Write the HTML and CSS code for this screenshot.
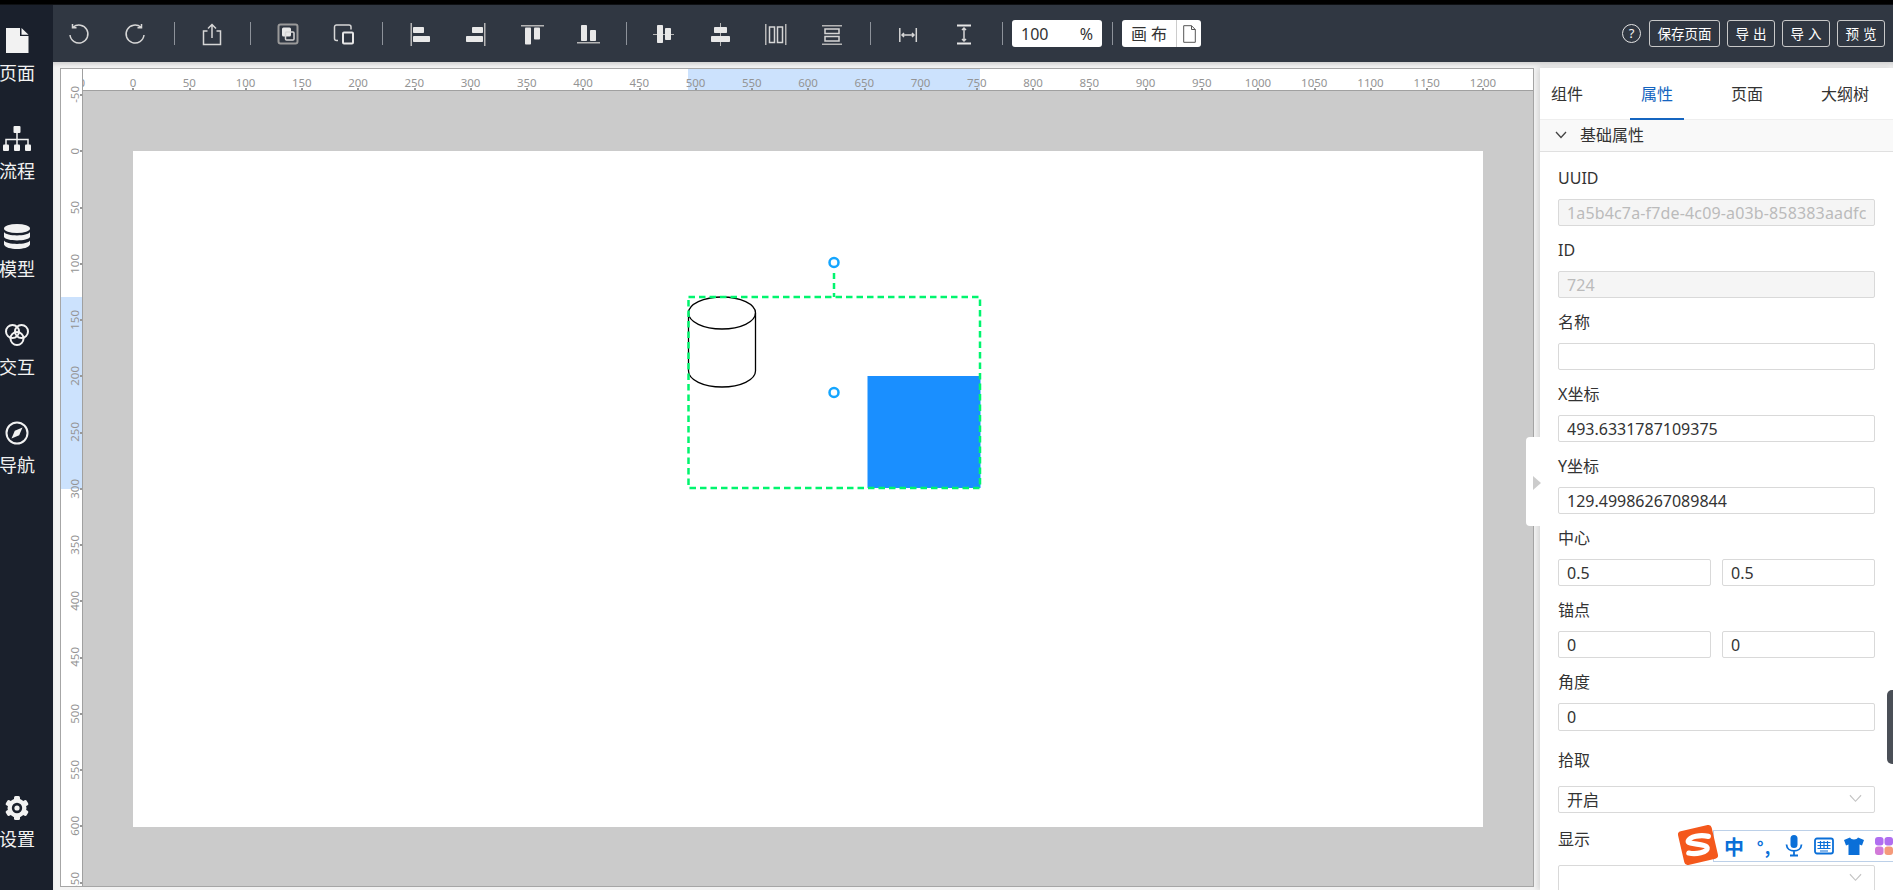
FILE: index.html
```html
<!DOCTYPE html>
<html lang="zh-CN">
<head>
<meta charset="utf-8">
<title>编辑器</title>
<link rel="stylesheet" href="styles.css">
</head>
<body>
<div class="strip"></div>
<div class="app">
  <nav class="sidebar">
    <div class="nav-item">
      <svg class="nav-icon" viewBox="0 0 28 26"><path class="ni-fill" d="M3 0H17V8H25.5V25H3Z"/><path class="ni-fill" d="M18.5 0 25.5 6.8H18.5Z"/></svg>
      <span>页面</span>
    </div>
    <div class="nav-item">
      <svg class="nav-icon" viewBox="0 0 28 26"><rect class="ni-fill" x="10.5" y="0" width="7" height="7" rx="1"/><path class="ni-line" d="M14 7V19M3 19V13.5H25V19"/><rect class="ni-fill" x="0" y="18.5" width="6" height="6.5" rx="1"/><rect class="ni-fill" x="11" y="18.5" width="6" height="6.5" rx="1"/><rect class="ni-fill" x="22" y="18.5" width="6" height="6.5" rx="1"/></svg>
      <span>流程</span>
    </div>
    <div class="nav-item">
      <svg class="nav-icon" viewBox="0 0 28 26"><ellipse class="ni-fill" cx="14" cy="4.5" rx="13" ry="4.5"/><path class="ni-fill" d="M1 8C3 12.500 25 12.500 27 8V13C25 17.500 3 17.500 1 13Z"/><path class="ni-fill" d="M1 16.500C3 21 25 21 27 16.500V20.500C25 26.500 3 26.500 1 20.500Z"/></svg>
      <span>模型</span>
    </div>
    <div class="nav-item">
      <svg class="nav-icon" viewBox="0 0 28 26"><g class="ni-ring"><circle cx="9.500" cy="9.500" r="6.500"/><circle cx="18.500" cy="9.500" r="6.500"/><circle cx="14" cy="16.500" r="6.500"/></g></svg>
      <span>交互</span>
    </div>
    <div class="nav-item">
      <svg class="nav-icon" viewBox="0 0 28 26"><circle class="ni-ring" cx="14" cy="13" r="10.500"/><path class="ni-fill" d="M19.500 7.500 16.200 15.200 8.500 18.500 11.800 10.800Z"/></svg>
      <span>导航</span>
    </div>
    <div class="nav-item nav-bottom">
      <svg class="nav-icon" viewBox="0 0 28 26"><g class="ni-fill"><circle cx="14" cy="13" r="9.500"/><rect x="11" y="1" width="6" height="24" rx="1.500"/><rect x="11" y="1" width="6" height="24" rx="1.500" transform="rotate(60 14 13)"/><rect x="11" y="1" width="6" height="24" rx="1.500" transform="rotate(120 14 13)"/></g><circle class="ni-hole" cx="14" cy="13" r="5.200"/><circle class="ni-fill" cx="14" cy="13" r="2.600"/></svg>
      <span>设置</span>
    </div>
  </nav>

  <div class="main">
    <header class="toolbar">
      <div class="tool-group first">
        <svg class="tool" viewBox="0 0 24 24"><path class="t-line" d="M3 13A9 9 0 1 0 6 5.300M5.500 2V5.800H9.500"/></svg>
        <svg class="tool" viewBox="0 0 24 24"><path class="t-line" d="M21 13A9 9 0 1 1 18 5.300M18.500 2V5.800H14.500"/></svg>
      </div>
      <i class="sep"></i>
      <div class="tool-group">
        <svg class="tool" viewBox="0 0 24 24"><path class="t-line" d="M7.500 9H3.500V22.500H20.500V9H16.500M12 16V2.500M8 6.500 12 2.500 16 6.500"/></svg>
      </div>
      <i class="sep"></i>
      <div class="tool-group">
        <svg class="tool" viewBox="0 0 24 24"><rect class="t-dim" x="2.500" y="2.500" width="19" height="19" rx="2"/><rect class="t-solid" x="6" y="5.500" width="9" height="9" rx="1.500"/><rect class="t-line" x="9.500" y="10" width="8.500" height="8" rx="1"/></svg>
        <svg class="tool" viewBox="0 0 24 24"><path class="t-line" d="M6 18.500H4.500A2 2 0 0 1 2.500 16.500V5A2 2 0 0 1 4.500 3H17A2 2 0 0 1 19 5V7.500"/><rect class="t-line thick" x="11" y="10.500" width="10" height="11" rx="1"/></svg>
      </div>
      <i class="sep"></i>
      <div class="tool-group">
        <svg class="tool" viewBox="0 0 24 24"><rect class="t-dim-bar" x="2.500" y="1" width="1.500" height="23"/><rect class="t-solid" x="5" y="5" width="11" height="6" rx=".8"/><rect class="t-solid" x="5" y="14" width="17" height="6" rx=".8"/></svg>
        <svg class="tool" viewBox="0 0 24 24"><rect class="t-dim-bar" x="20" y="1" width="1.500" height="23"/><rect class="t-solid" x="8" y="5" width="11" height="6" rx=".8"/><rect class="t-solid" x="2" y="14" width="17" height="6" rx=".8"/></svg>
        <svg class="tool" viewBox="0 0 24 24"><rect class="t-dim-bar" x="1" y="3" width="23" height="1.500"/><rect class="t-solid" x="5" y="5.500" width="6" height="17" rx=".8"/><rect class="t-solid" x="14" y="5.500" width="6" height="12" rx=".8"/></svg>
        <svg class="tool" viewBox="0 0 24 24"><rect class="t-dim-bar" x="1" y="20" width="23" height="1.500"/><rect class="t-solid" x="5" y="3" width="6" height="16" rx=".8"/><rect class="t-solid" x="14" y="8" width="6" height="11" rx=".8"/></svg>
      </div>
      <i class="sep"></i>
      <div class="tool-group">
        <svg class="tool" viewBox="0 0 24 24"><rect class="t-dim-bar" x="1" y="12" width="21" height="1"/><rect class="t-solid" x="5" y="3" width="6" height="18" rx=".8"/><rect class="t-solid" x="13" y="6" width="6" height="12" rx=".8"/></svg>
        <svg class="tool" viewBox="0 0 24 24"><rect class="t-dim-bar" x="12" y="1" width="1" height="23"/><rect class="t-solid" x="6" y="5" width="13" height="6" rx=".8"/><rect class="t-solid" x="3" y="14" width="19" height="6" rx=".8"/></svg>
        <svg class="tool" viewBox="0 0 24 24"><rect class="t-dim-bar" x="1" y="2" width="1.500" height="21"/><rect class="t-dim-bar" x="21" y="2" width="1.500" height="21"/><rect class="t-line" x="5.500" y="5" width="5" height="15.500"/><rect class="t-line" x="13.500" y="5" width="5" height="15.500"/></svg>
        <svg class="tool" viewBox="0 0 24 24"><rect class="t-dim-bar" x="2" y="3" width="20" height="1.500"/><rect class="t-dim-bar" x="2" y="21.500" width="20" height="1.500"/><rect class="t-line" x="5" y="7" width="14" height="4.500"/><rect class="t-line" x="5" y="14.500" width="14" height="4.500"/></svg>
      </div>
      <i class="sep"></i>
      <div class="tool-group">
        <svg class="tool" viewBox="0 0 24 24"><path class="t-line" d="M3.800 6V20M20.300 6V20M6 13H18M8 11 6 13 8 15M16 11 18 13 16 15"/></svg>
        <svg class="tool" viewBox="0 0 24 24"><path class="t-line thick" d="M5 3.500H19M5 21.500H19"/><path class="t-line" d="M12 6V19M10 8 12 6 14 8M10 17 12 19 14 17"/></svg>
      </div>
      <i class="sep"></i>
      <div class="zoom-box"><span>100</span><span>%</span></div>
      <i class="sep"></i>
      <div class="canvas-switch">
        <span class="canvas-label">画布</span>
        <span class="canvas-page">
          <svg class="canvas-page-icon" viewBox="0 0 13 18"><path d="M.7.700H8.500L12.300 4.500V17.300H.7ZM8.500.700V4.500H12.300"/></svg>
        </span>
      </div>
      <div class="actions">
        <span class="help">?</span>
        <button class="btn">保存页面</button>
        <button class="btn btn-short">导出</button>
        <button class="btn btn-short">导入</button>
        <button class="btn btn-short">预览</button>
      </div>
    </header>

    <div class="content">
      <section class="design">
        <div class="vruler">
          <i class="vmark"></i>
          <div class="vcells">
            <span class="vcell"><b>-50</b></span><span class="vcell"><b>0</b></span><span class="vcell"><b>50</b></span><span class="vcell"><b>100</b></span><span class="vcell"><b>150</b></span><span class="vcell"><b>200</b></span><span class="vcell"><b>250</b></span><span class="vcell"><b>300</b></span><span class="vcell"><b>350</b></span><span class="vcell"><b>400</b></span><span class="vcell"><b>450</b></span><span class="vcell"><b>500</b></span><span class="vcell"><b>550</b></span><span class="vcell"><b>600</b></span><span class="vcell"><b>650</b></span>
          </div>
        </div>
        <div class="hruler">
          <i class="hmark"></i>
          <div class="hcells">
            <span class="hcell"><b>-50</b></span><span class="hcell"><b>0</b></span><span class="hcell"><b>50</b></span><span class="hcell"><b>100</b></span><span class="hcell"><b>150</b></span><span class="hcell"><b>200</b></span><span class="hcell"><b>250</b></span><span class="hcell"><b>300</b></span><span class="hcell"><b>350</b></span><span class="hcell"><b>400</b></span><span class="hcell"><b>450</b></span><span class="hcell"><b>500</b></span><span class="hcell"><b>550</b></span><span class="hcell"><b>600</b></span><span class="hcell"><b>650</b></span><span class="hcell"><b>700</b></span><span class="hcell"><b>750</b></span><span class="hcell"><b>800</b></span><span class="hcell"><b>850</b></span><span class="hcell"><b>900</b></span><span class="hcell"><b>950</b></span><span class="hcell"><b>1000</b></span><span class="hcell"><b>1050</b></span><span class="hcell"><b>1100</b></span><span class="hcell"><b>1150</b></span><span class="hcell"><b>1200</b></span>
          </div>
        </div>
        <div class="stage">
          <div class="page">
            <svg class="scene" viewBox="0 0 1349 676">
              <rect class="obj-rect" x="734" y="225" width="113" height="112"/>
              <ellipse class="obj-cyl" cx="588.500" cy="162" rx="33.500" ry="16"/>
              <path class="obj-cyl" d="M555 162V220A33.500 16 0 0 0 622 220V162"/>
              <rect class="sel-box" x="555" y="146" width="291.500" height="191"/>
              <path class="sel-line" d="M700.500 122V146"/>
              <circle class="sel-handle" cx="700.500" cy="111.500" r="4.500"/>
              <circle class="sel-handle" cx="700.500" cy="241.500" r="4.500"/>
            </svg>
          </div>
        </div>
      </section>

      <aside class="panel">
        <div class="panel-toggle"><i class="toggle-arrow"></i></div>
        <div class="tabs">
          <span class="tab">组件</span>
          <span class="tab active">属性</span>
          <span class="tab">页面</span>
          <span class="tab">大纲树</span>
        </div>
        <div class="section-head">
          <svg class="chev" viewBox="0 0 12 8"><path d="M1 1 6 6.500 11 1"/></svg>
          <span>基础属性</span>
        </div>
        <div class="form">
          <label class="lbl lbl-first">UUID</label>
          <input class="field" disabled value="1a5b4c7a-f7de-4c09-a03b-858383aadfc1">
          <label class="lbl">ID</label>
          <input class="field" disabled value="724">
          <label class="lbl">名称</label>
          <input class="field" readonly value="">
          <label class="lbl">X坐标</label>
          <input class="field" readonly value="493.6331787109375">
          <label class="lbl">Y坐标</label>
          <input class="field" readonly value="129.49986267089844">
          <label class="lbl">中心</label>
          <div class="pair">
            <input class="field" readonly value="0.5">
            <input class="field" readonly value="0.5">
          </div>
          <label class="lbl">锚点</label>
          <div class="pair">
            <input class="field" readonly value="0">
            <input class="field" readonly value="0">
          </div>
          <label class="lbl lbl-tall">角度</label>
          <input class="field field-tall" readonly value="0">
          <label class="lbl lbl-pick">拾取</label>
          <div class="select"><span>开启</span><svg class="sel-chev" viewBox="0 0 14 9"><path d="M1 1 7 7.500 13 1"/></svg></div>
          <label class="lbl lbl-show">显示</label>
          <div class="select"><span></span><svg class="sel-chev" viewBox="0 0 14 9"><path d="M1 1 7 7.500 13 1"/></svg></div>
        </div>
      </aside>
    </div>
  </div>
</div>

<div class="edge-tab"></div>

<div class="ime">
  <svg class="ime-logo" viewBox="0 0 40 40"><rect class="ime-logo-bg" x="5" y="5" width="30" height="30" rx="3" transform="rotate(-13 20 20)"/><path class="ime-logo-s" d="M29 12.500C22 11 13 12.500 11.500 16.500 10.500 20 27.500 18.500 28 22.500 28.500 26.500 18 28.500 12 27"/></svg>
  <span class="ime-item ime-zh">中</span>
  <span class="ime-item ime-punc">°,</span>
  <span class="ime-item"><svg class="ime-icon" viewBox="0 0 20 22"><rect class="ime-fill" x="6.500" y="0" width="7" height="13" rx="3.500"/><path class="ime-line" d="M2.500 9.500C3 18 17 18 17.500 9.500M10 16V20M6 20.500H14"/></svg></span>
  <span class="ime-item"><svg class="ime-icon" viewBox="0 0 20 22"><rect class="ime-line" x="1" y="3.500" width="18" height="15" rx="2"/><path class="ime-thin" d="M3.500 7.500H16.500M3.500 10.500H16.500M3.500 13.500H16.500M6.500 6V14M10 6V14M13.500 6V14M6 16H14"/></svg></span>
  <span class="ime-item"><svg class="ime-icon" viewBox="0 0 20 22"><path class="ime-fill" d="M6 2.500 0 5 2 10.500 4.500 9.500V20H15.500V9.500L18 10.500 20 5 14 2.500C13 5 7 5 6 2.500Z"/></svg></span>
  <span class="ime-item"><svg class="ime-icon" viewBox="0 0 20 22"><rect class="clover-a" x="1" y="2" width="8.500" height="8.500" rx="3"/><rect class="clover-a" x="10.500" y="2" width="8.500" height="8.500" rx="3"/><rect class="clover-c" x="1" y="11.500" width="8.500" height="8.500" rx="3"/><rect class="clover-b" x="10.500" y="11.500" width="8.500" height="8.500" rx="3"/></svg></span>
</div>
</body>
</html>
```

FILE: styles.css
```css
* { box-sizing: border-box; }
html, body { margin: 0; height: 100%; }
body {
  width: 1893px;
  height: 890px;
  overflow: hidden;
  position: relative;
  font-family: "Noto Sans", "Noto Sans CJK SC", sans-serif;
  font-size: 16px;
  color: #333;
  display: flex;
  flex-direction: column;
  background: #f3f3f3;
}

.strip { height: 5px; flex: none; background: linear-gradient(#000 70%, #15181d); }
.app { flex: 1; display: flex; min-height: 0; }

/* Sidebar */
.sidebar {
  width: 53px;
  flex: none;
  background: #1a202c;
  color: #f2f2f2;
  display: flex;
  flex-direction: column;
  padding: 15px 0 40px;
  overflow: hidden;
}
.nav-item {
  width: 34px;
  height: 98px;
  display: flex;
  flex-direction: column;
  align-items: center;
  padding-top: 8px;
  flex: none;
  gap: 6px;
}
.nav-item span { font-size: 18px; line-height: 24px; white-space: nowrap; font-family: "Noto Sans CJK SC", sans-serif; }
.nav-bottom { margin-top: auto; height: auto; padding-top: 0; gap: 5px; }
.nav-icon { width: 28px; height: 26px; flex: none; }
.ni-fill { fill: #f2f2f2; }
.ni-line { fill: none; stroke: #f2f2f2; stroke-width: 1.500; }
.ni-ring { fill: none; stroke: #f2f2f2; stroke-width: 2; }
.ni-hole { fill: #1a202c; }

/* Toolbar */
.main { flex: 1; min-width: 0; display: flex; flex-direction: column; }
.toolbar {
  height: 57px;
  flex: none;
  background: #303742;
  display: flex;
  align-items: center;
}
.tool-group { display: flex; gap: 32px; padding: 0 16px; }
.tool-group.first { padding-left: 14px; padding-right: 17px; }
.tool { width: 24px; height: 24px; flex: none; }
.t-line { fill: none; stroke: #d6d6d6; stroke-width: 1.500; }
.t-line.thick { stroke-width: 2; stroke: #e6e6e6; }
.t-dim { fill: none; stroke: #9a9a9a; stroke-width: 2; }
.t-dim-bar { fill: #b5b5b5; }
.t-solid { fill: #e8e8e8; }
.sep { width: 1px; height: 23px; margin: 0 9.500px; background: #8d929a; flex: none; }

.zoom-box {
  width: 90px;
  height: 27px;
  background: #fff;
  border-radius: 3px;
  display: flex;
  justify-content: space-between;
  align-items: center;
  padding: 0 9px 0 9px;
  flex: none;
}
.canvas-switch {
  height: 27px;
  width: 79px;
  background: #fff;
  border-radius: 3px;
  display: flex;
  flex: none;
}
.canvas-label {
  width: 54px;
  text-align: center;
  letter-spacing: 4px;
  padding-left: 4px;
  line-height: 27px;
  font-family: "Noto Sans CJK SC", sans-serif;
}
.canvas-page {
  flex: 1;
  border-left: 1px solid #ccc;
  display: flex;
  align-items: center;
  justify-content: center;
}
.canvas-page-icon { width: 13px; height: 18px; fill: none; stroke: #555; stroke-width: 1; }

.actions { margin-left: auto; display: flex; align-items: center; gap: 7px; padding-right: 8px; }
.help {
  width: 19px;
  height: 19px;
  border: 1.500px solid #e4e4e4;
  border-radius: 50%;
  color: #f4f4f4;
  font-size: 13px;
  line-height: 16px;
  text-align: center;
  margin-right: 1px;
}
.btn {
  height: 27px;
  width: 71px;
  padding: 0;
  background: transparent;
  border: 1px solid #c8c8c8;
  border-radius: 3px;
  color: #fff;
  font: 13.500px/25px "Noto Sans CJK SC", sans-serif;
  text-align: center;
}
.btn-short { width: 48px; letter-spacing: 4px; text-indent: 4px; }

/* Design surface */
.content {
  flex: 1;
  min-height: 0;
  display: flex;
  background: #f3f3f3;
  box-shadow: inset 0 4px 4px -2px rgba(0, 0, 0, .16);
}
.design {
  width: 1474px;
  height: 819px;
  margin: 6px 0 0 7px;
  flex: none;
  background: #fff;
  border: 1px solid #a6a6a6;
  display: grid;
  grid-template-columns: 22px 1fr;
  grid-template-rows: 22px 1fr;
}
.vruler {
  grid-column: 1;
  grid-row: 1 / 3;
  position: relative;
  border-right: 1px solid #a0a0a0;
  overflow: hidden;
}
.hruler {
  grid-column: 2;
  grid-row: 1;
  position: relative;
  border-bottom: 1px solid #a0a0a0;
  overflow: hidden;
}
.hmark { position: absolute; left: 605px; top: 0; bottom: 0; width: 292px; background: #cce2fd; }
.vmark { position: absolute; top: 228px; left: 0; right: 0; height: 192px; background: #cce2fd; }
.hcells { display: flex; margin-left: -34.375px; position: relative; }
.vcells { display: flex; flex-direction: column; margin-top: -2.375px; position: relative; }
.hcell {
  width: 56.250px;
  height: 21px;
  flex: none;
  position: relative;
  text-align: center;
}
.vcell {
  height: 56.250px;
  width: 21px;
  flex: none;
  position: relative;
  display: flex;
  align-items: center;
  justify-content: center;
}
.hcell b, .vcell b {
  font-weight: 400;
  font-size: 11.500px;
  line-height: 12px;
  color: #949494;
}
.hcell b { display: block; padding-top: 8px; }
.vcell b { writing-mode: vertical-rl; transform: rotate(180deg); margin-left: 7px; white-space: nowrap; }
.hcell::after {
  content: "";
  position: absolute;
  left: 27.500px;
  bottom: 0;
  width: 2px;
  height: 2px;
  background: #999;
}
.vcell::after {
  content: "";
  position: absolute;
  top: 27.500px;
  right: 0;
  width: 2px;
  height: 2px;
  background: #999;
}
.stage {
  grid-column: 2;
  grid-row: 2;
  background: #cbcbcb;
  padding: 60px 50px 59px 50px;
  display: flex;
  min-height: 0;
}
.page { flex: 1; background: #fff; position: relative; }
.scene { position: absolute; inset: 0; width: 100%; height: 100%; }
.obj-rect { fill: #1a8fff; }
.obj-cyl { fill: none; stroke: #000; stroke-width: 1.300; }
.sel-box { fill: none; stroke: #00f56e; stroke-width: 2.500; stroke-dasharray: 6.500 4; }
.sel-line { fill: none; stroke: #00f56e; stroke-width: 2.500; stroke-dasharray: 6 4; }
.sel-handle { fill: #fff; stroke: #14a5ff; stroke-width: 2.500; }

/* Right panel */
.panel {
  flex: 1;
  margin: 6px 0 0 6px;
  background: #fff;
  position: relative;
  box-shadow: -2px 0 6px rgba(0, 0, 0, .14);
}
.panel-toggle {
  position: absolute;
  left: -14px;
  top: 369px;
  width: 14px;
  height: 89px;
  background: #fff;
  border-radius: 4px 0 0 4px;
  z-index: 2;
  display: flex;
  align-items: center;
  padding-left: 7px;
}
.toggle-arrow {
  width: 0;
  height: 0;
  flex: none;
  border-left: 8px solid #ccc;
  border-top: 7.500px solid transparent;
  border-bottom: 7.500px solid transparent;
  margin-top: 3px;
}
.tabs {
  height: 52px;
  display: flex;
  gap: 36px;
  border-bottom: 1px solid #eee;
  padding-left: 0;
}
.tab {
  padding: 13px 11px 0;
  line-height: 24px;
  height: 52px;
  font-family: "Noto Sans CJK SC", sans-serif;
}
.tab.active { color: #1565c0; border-bottom: 2px solid #1565c0; }
.section-head {
  height: 32px;
  background: #f9f9f9;
  border-bottom: 1px solid #e0e0e0;
  display: flex;
  align-items: center;
  padding: 0 0 3px 15px;
  gap: 13px;
  font-family: "Noto Sans CJK SC", sans-serif;
}
.chev { width: 12px; height: 8px; fill: none; stroke: #444; stroke-width: 1.300; margin-top: 2px; }
.form { padding: 2px 18px 0; display: flex; flex-direction: column; }
.lbl {
  height: 45px;
  padding-top: 13px;
  line-height: 22px;
  display: block;
  flex: none;
}
.lbl-pick { height: 55px; padding-top: 18px; }
.lbl-show { height: 52px; padding-top: 15px; }
.field {
  display: block;
  width: 100%;
  height: 27px;
  border: 1px solid #d9d9d9;
  border-radius: 2px;
  padding: 0 8px;
  font: 16px "Noto Sans", "Noto Sans CJK SC", sans-serif;
  color: #333;
  background: #fff;
  outline: none;
  flex: none;
}
.field-tall { height: 28px; }
.field:disabled { background: #f5f5f5; color: #bbb; letter-spacing: .15px; }
.pair { display: flex; gap: 11px; flex: none; }
.pair .field { flex: 1; min-width: 0; }
.select {
  height: 27px;
  flex: none;
  border: 1px solid #d9d9d9;
  border-radius: 2px;
  padding: 0 12px 2px 8px;
  display: flex;
  align-items: center;
  justify-content: space-between;
  font-family: "Noto Sans CJK SC", sans-serif;
}
.sel-chev { width: 13px; height: 9px; fill: none; stroke: #c4c4c4; stroke-width: 1.200; }

/* Overlays on the page */
.edge-tab {
  position: absolute;
  right: 0;
  top: 690px;
  width: 6px;
  height: 74px;
  background: #4a4f57;
  border-radius: 5px 0 0 5px;
}
.ime {
  position: absolute;
  left: 1713px;
  top: 830px;
  width: 180px;
  height: 32px;
  background: #fff;
  border: 1px solid #bcd0e8;
  border-right: 0;
  display: flex;
  align-items: center;
  padding-left: 5px;
  overflow: visible;
}
.ime-logo { position: absolute; left: -39px; top: -9px; width: 46px; height: 46px; }
.ime-logo-bg { fill: #f4581c; }
.ime-logo-s { fill: none; stroke: #fff; stroke-width: 4.500; stroke-linecap: round; }
.ime-item {
  width: 30px;
  height: 30px;
  flex: none;
  display: flex;
  align-items: center;
  justify-content: center;
  color: #0a6fd8;
  font-family: "Noto Sans CJK SC", sans-serif;
}
.ime-zh { font-size: 20px; font-weight: 700; }
.ime-punc { font-size: 17px; font-weight: 700; letter-spacing: 1px; }
.ime-icon { width: 20px; height: 22px; }
.ime-fill { fill: #0a6fd8; }
.ime-line { fill: none; stroke: #0a6fd8; stroke-width: 1.800; }
.ime-thin { fill: none; stroke: #0a6fd8; stroke-width: 1.200; }
.clover-a { fill: #b06ef0; }
.clover-b { fill: #f59a7a; }
.clover-c { fill: #d27ad8; }
```
